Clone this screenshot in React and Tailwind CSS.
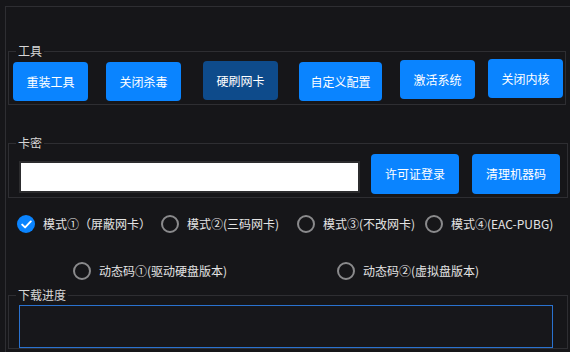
import React from "react";

const font = { fontFamily: '"Noto Sans CJK SC", "Noto Sans", sans-serif' };

function Btn({ label, className = "" }) {
  return (
    <div
      className={`flex items-center justify-center rounded-[4px] text-[12px] text-white shrink-0 ${className}`}
    >
      {label}
    </div>
  );
}

function Radio({ checked, label, className = "" }) {
  return (
    <div className={`flex items-center shrink-0 ${className}`}>
      {checked ? (
        <div className="w-[18px] h-[18px] rounded-full bg-[#0a84ff] flex items-center justify-center shrink-0">
          <svg width="11" height="9" viewBox="0 0 11 9" fill="none">
            <path d="M1.2 4.6 L4.1 7.4 L9.8 1.4" stroke="white" strokeWidth="1.9" strokeLinecap="round" strokeLinejoin="round" />
          </svg>
        </div>
      ) : (
        <div className="w-[18px] h-[18px] rounded-full border-2 border-[#8a8a8c] shrink-0" />
      )}
      <span className="ml-[8px] text-[12px] text-[#e4e4e4] whitespace-nowrap">{label}</span>
    </div>
  );
}

function Legend({ children }) {
  return (
    <legend className="ml-[7px] px-[2px] text-[12px] leading-[14px] text-[#d6d6d6]">{children}</legend>
  );
}

export default function App() {
  return (
    <div className="w-[570px] h-[352px] overflow-hidden bg-[#161619] pt-[6px] pl-[5px]" style={font}>
      <div className="w-[620px] h-[400px] border-t border-l border-[#2e2e32] flex flex-col">
        {/* 工具 */}
        <fieldset className="ml-[2px] mt-[37px] w-[558px] border border-[#2e2e32] pb-[3px]">
          <Legend>工具</Legend>
          <div className="flex items-start mt-[3px]">
            <Btn label="重装工具" className="ml-[4px] mt-[1px] w-[75px] h-[39px] bg-[#0a84ff]" />
            <Btn label="关闭杀毒" className="ml-[18px] mt-[1px] w-[75px] h-[39px] bg-[#0a84ff]" />
            <Btn label="硬刷网卡" className="ml-[22px] mt-[0px] w-[75px] h-[39px] bg-[#0e4b8b]" />
            <Btn label="自定义配置" className="ml-[21px] mt-[1px] w-[83px] h-[39px] bg-[#0a84ff]" />
            <Btn label="激活系统" className="ml-[18px] mt-[-1px] w-[75px] h-[39px] bg-[#0a84ff]" />
            <Btn label="关闭内核" className="ml-[13px] mt-[-2px] w-[75px] h-[39px] bg-[#0a84ff]" />
          </div>
        </fieldset>

        {/* 卡密 */}
        <fieldset className="ml-[2px] mt-[31px] w-[560px] border border-[#2e2e32] pb-[3px]">
          <Legend>卡密</Legend>
          <div className="flex items-start mt-[4px]">
            <div className="ml-[10px] mt-[7px] w-[341px] h-[32px] bg-white border-2 border-[#2c2c2e]" />
            <Btn label="许可证登录" className="ml-[11px] w-[88px] h-[40px] bg-[#0a84ff]" />
            <Btn label="清理机器码" className="ml-[13px] w-[88px] h-[40px] bg-[#0a84ff]" />
          </div>
        </fieldset>

        {/* radios row 1 */}
        <div className="flex items-center mt-[17px] ml-[11px] h-[18px]">
          <Radio checked label="模式①（屏蔽网卡）" className="w-[144px]" />
          <Radio label="模式②(三码网卡)" className="w-[136px]" />
          <Radio label="模式③(不改网卡)" className="w-[128px]" />
          <Radio label="模式④(EAC-PUBG)" />
        </div>

        {/* radios row 2 */}
        <div className="flex items-center mt-[29px] ml-[67px] h-[18px]">
          <Radio label="动态码①(驱动硬盘版本)" className="w-[264px]" />
          <Radio label="动态码②(虚拟盘版本)" />
        </div>

        {/* 下载进度 */}
        <fieldset className="ml-[2px] mt-[8px] w-[560px] border border-[#2e2e32]">
          <Legend>下载进度</Legend>
          <div className="ml-[10px] mt-[3px] w-[534px] h-[43px] border border-[#2a72cf] bg-[#17171b]" />
        </fieldset>
      </div>
    </div>
  );
}
